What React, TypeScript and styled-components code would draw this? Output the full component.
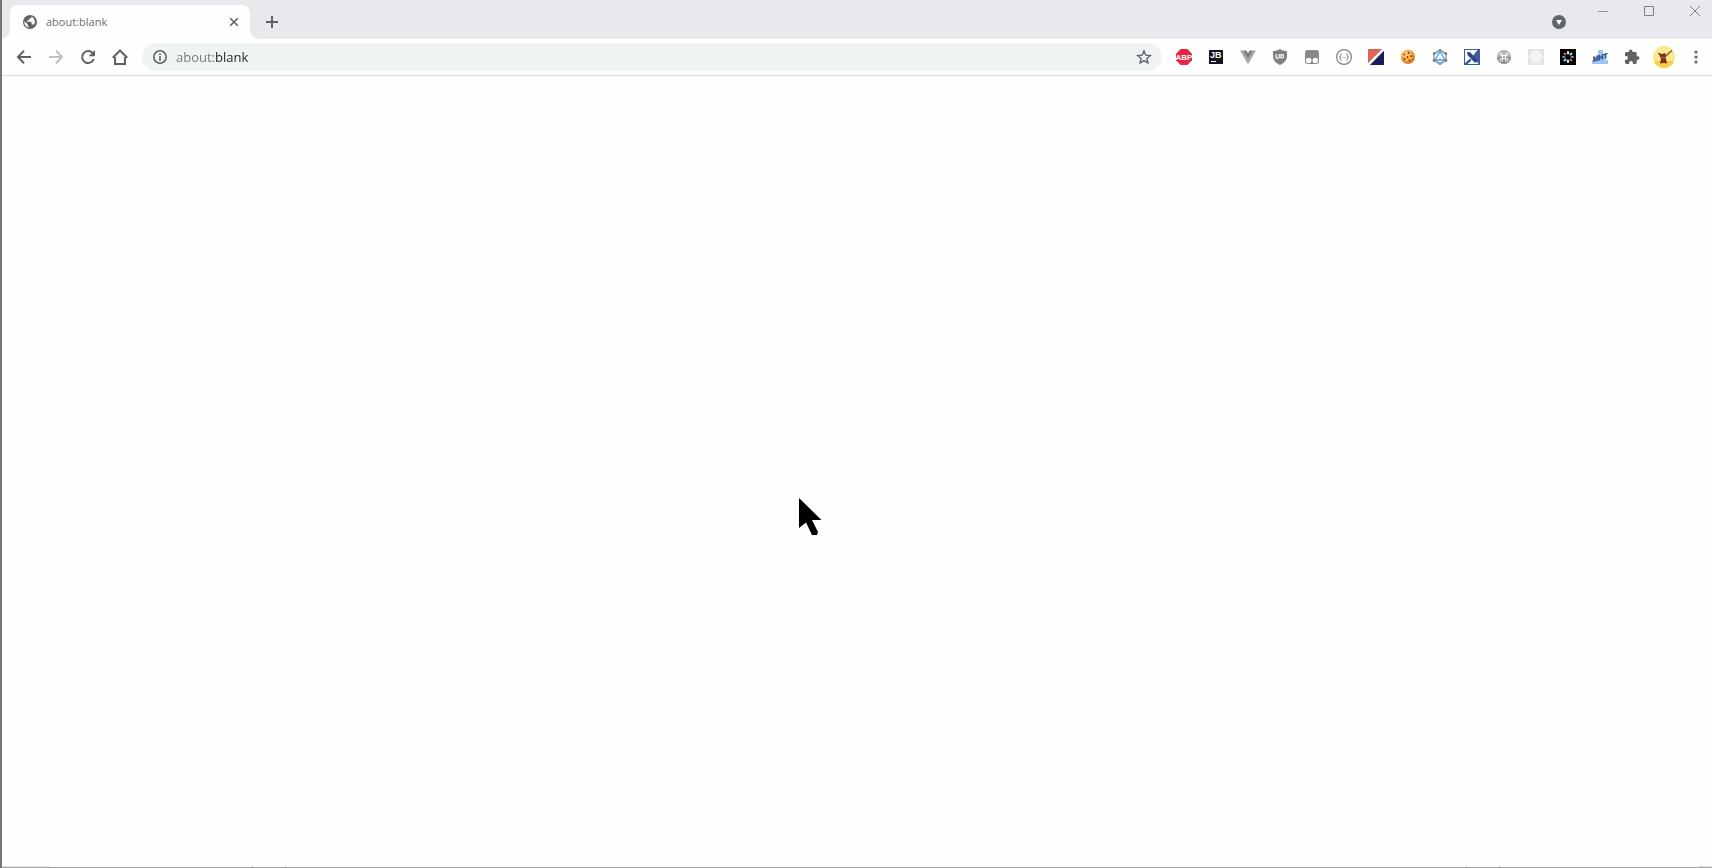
import React from "react";
import styled, { createGlobalStyle } from "styled-components";

const GlobalStyle = createGlobalStyle`
  * { box-sizing: border-box; }
  body { margin: 0; background: #fefefe; font-family: "Open Sans", "Noto Sans", sans-serif; }
  button, input { font: inherit; }
`;

const Window = styled.div`
  display: flex;
  flex-direction: column;
  min-height: 100vh;
  border-left: 2px solid #757575;
  overflow: hidden;
`;

const TabStrip = styled.header`
  display: flex;
  align-items: flex-end;
  height: 39px;
  padding-left: 8px;
  background: #e8e9ed;
`;

const Tab = styled.div`
  position: relative;
  display: flex;
  align-items: center;
  width: 240px;
  height: 34px;
  padding: 0 8px 0 13px;
  background: #fefefe;
  border-radius: 8px 8px 0 0;

  &::before,
  &::after {
    content: "";
    position: absolute;
    bottom: 0;
    width: 8px;
    height: 8px;
  }
  &::before {
    right: 100%;
    background: radial-gradient(circle at 0 0, transparent 7px, #fefefe 8px);
  }
  &::after {
    left: 100%;
    background: radial-gradient(circle at 100% 0, transparent 7px, #fefefe 8px);
  }
`;

const TabTitle = styled.span`
  flex: 1;
  margin-left: 9px;
  font-size: 11px;
  line-height: 16px;
  color: #6f7174;
`;

const IconButton = styled.button<{ $w?: number; $h?: number }>`
  display: flex;
  flex: none;
  align-items: center;
  justify-content: center;
  width: ${(p) => p.$w ?? 32}px;
  height: ${(p) => p.$h ?? 32}px;
  padding: 0;
  border: 0;
  background: none;
  color: #5f6368;

  svg { display: block; }
  &:disabled { color: #bfc1c3; }
`;

const WindowControls = styled.div`
  display: flex;
  flex: none;
  align-self: flex-start;
  margin-left: auto;
  margin-right: -6px;
`;

const TabSearch = styled.div`
  padding-top: 11px;
  margin-right: 5px;
`;

const Toolbar = styled.nav`
  display: flex;
  align-items: center;
  height: 37px;
  padding-left: 6px;
  border-bottom: 1px solid #dadbdd;
`;

const Omnibox = styled.label`
  display: flex;
  flex: 1;
  align-items: center;
  min-width: 0;
  height: 28px;
  margin: 0 6px;
  padding: 0 2px 0 11px;
  border-radius: 14px;
  background: #f0f3f4;
  color: #5f6368;

  svg { flex: none; }
`;

const Address = styled.input`
  flex: 1;
  min-width: 0;
  height: 20px;
  margin-left: 9px;
  padding: 0;
  border: 0;
  outline: 0;
  font-size: 13px;
  line-height: 20px;
  /* the scheme is dimmed, the rest of the address is dark */
  background: linear-gradient(90deg, #73777b 40px, #202124 40px);
  background-clip: text;
  -webkit-background-clip: text;
  -webkit-text-fill-color: transparent;
`;

const Page = styled.main`
  display: flex;
  flex: 1;
  flex-direction: column;
  justify-content: flex-end;
`;

const BottomEdge = styled.footer`
  display: flex;
  justify-content: space-between;
  height: 2px;
  border-bottom: 1px solid #a3a3a3;
`;

const EdgeGroup = styled.div`
  display: flex;
`;

const EdgeShade = styled.div<{ $w: number }>`
  width: ${(p) => p.$w}px;
  height: 1px;
  background: #e4e4e4;
`;

const EdgeTick = styled.div<{ $before: number }>`
  width: 1px;
  height: 1px;
  margin-left: ${(p) => p.$before}px;
  background: #b0b0b0;
`;

const Pointer = styled.svg`
  position: absolute;
  left: 799px;
  top: 498px;
`;

type ArtProps = { size?: number; children: React.ReactNode };

const Art = ({ size = 16, children }: ArtProps) => (
  <svg width={size} height={size} viewBox={`0 0 ${size} ${size}`} fill="none" aria-hidden="true">
    {children}
  </svg>
);

const Globe = () => (
  <Art size={14}>
    <circle cx="7" cy="7" r="7" fill="#5f6368" />
    <path d="M1.4 6.2 4.9 9.600v1.100c0 .7.5 1.100 1.200 1.100v.8A5.600 5.600 0 0 1 1.400 6.200ZM8.300 1.600v.9c0 .8-.6 1.200-1.200 1.200H6v1.100c0 .5-.4.8-.8.8H4v1.200h3.800c.5 0 .8.4.8.8v1.600h.8c.7 0 1.100.4 1.300.9a5.600 5.600 0 0 0-2.400-8.500Z" fill="#fefefe" />
  </Art>
);

const Octagon = () => (
  <Art>
    <path d="M4.700 0h6.600L16 4.700v6.600L11.300 16H4.700L0 11.300V4.700Z" fill="#e62645" />
    <text x="8" y="11" textAnchor="middle" fontFamily="Liberation Sans Narrow, Liberation Sans" fontWeight="700" fontSize="8" fill="#fff">ABP</text>
  </Art>
);

const JetBrains = () => (
  <Art>
    <path d="M1 1h14v14H1Z" fill="#17131f" />
    <text x="2" y="9" fontFamily="Liberation Sans" fontWeight="700" fontSize="9" fill="#fff">JB</text>
    <path d="M3 12.500h5" stroke="#fff" />
  </Art>
);

const Vue = () => (
  <Art>
    <path d="M0 1.500h3.400L8 9.400l4.600-7.900H16L8 15.200Z" fill="#a5a5a5" />
    <path d="M3.200 1.500h3L8 4.600l1.800-3.100h3L8 9.800Z" fill="#777" />
  </Art>
);

const Shield = () => (
  <Art>
    <path d="M8 0c2 1.400 4.300 2 7 2v5c0 4.300-2.800 7-7 9-4.200-2-7-4.700-7-9V2c2.700 0 5-.6 7-2Z" fill="#808080" />
    <path d="M4 5v2.700a1.600 1.600 0 0 0 3.200 0V5M9 5.600v3.400h.9a1.700 1.700 0 0 0 0-3.400Z" stroke="#fff" strokeWidth="1.200" />
  </Art>
);

const Monkey = () => (
  <Art>
    <rect x="1" y="1" width="14" height="14" rx="3" fill="#888" />
    <circle cx="4.700" cy="11.500" r="2.700" fill="#fff" />
    <circle cx="11.300" cy="11.500" r="2.700" fill="#fff" />
  </Art>
);

const Swagger = () => (
  <Art>
    <circle cx="8" cy="8" r="7.400" stroke="#808080" strokeWidth="1.200" />
    <path d="M5.700 4.700c-1.500 0-1.200.7-1.200 1.800S4.200 8 3.500 8c.7 0 1 .4 1 1.500s-.3 1.800 1.200 1.800M10.300 4.700c1.500 0 1.200.7 1.200 1.800S11.800 8 12.500 8c-.7 0-1 .4-1 1.500s.3 1.800-1.200 1.800" stroke="#777" />
    <path d="M6 8.500h.9M7.600 8.500h.9M9.200 8.500h.9" stroke="#999" />
  </Art>
);

const SplitSquare = () => (
  <Art>
    <path d="M0 0h16L0 16Z" fill="#e0635a" />
    <path d="M16 0v16H0Z" fill="#1c1c5c" />
    <path d="M16.500-.5-.5 16.500" stroke="#fff" strokeWidth="2.600" />
  </Art>
);

const Cookie = () => (
  <Art>
    <circle cx="8" cy="8" r="7" fill="#dc8423" />
    <circle cx="7.400" cy="7" r="5.800" fill="#f3b04c" />
    <circle cx="6" cy="5.500" r="3" fill="#f8cf72" />
    <g fill="#98261c">
      <circle cx="4.300" cy="5.500" r=".9" />
      <circle cx="8.500" cy="4" r=".9" />
      <circle cx="7.500" cy="8" r=".9" />
      <circle cx="11.500" cy="7.300" r="1" />
      <circle cx="4.500" cy="10" r=".9" />
      <circle cx="9.500" cy="11.500" r="1" />
      <circle cx="12.500" cy="10.500" r=".7" />
    </g>
  </Art>
);

const GraphStar = () => (
  <Art>
    <path d="m8 1 6 3.500v7L8 15l-6-3.500v-7Z" fill="#fff" stroke="#9b9384" strokeWidth="1.400" />
    <path d="M8 2.500 13 11H3Z" fill="#fff" stroke="#429ce8" strokeWidth="1.300" />
    <path d="M3.500 5.500 8 1.500l4.500 4M4 11.500 8 14.500l4-3" stroke="#6bb2ec" />
    <g fill="#77705f">
      <circle cx="2" cy="4.500" r="1.200" />
      <circle cx="14" cy="4.500" r="1.200" />
      <circle cx="2" cy="11.500" r="1.200" />
      <circle cx="14" cy="11.500" r="1.200" />
    </g>
    <g fill="#429ce8">
      <circle cx="8" cy="1.300" r="1.300" />
      <circle cx="8" cy="14.700" r="1.300" />
    </g>
  </Art>
);

const CrossSquare = () => (
  <Art>
    <path d="M0 0h16v16H0Z" fill="#3d5c9f" />
    <path d="M1 1h13L10.500 5.500 8 8 1 15ZM8 8l3.500 2.500L14.500 15H2Z" fill="#fff" />
    <path d="M1 2v12l4-5.500Z" fill="#fff" />
    <path d="m3 3 3.200.2L13.500 11l-.8 2.200-2.300.4L3.600 6Z" fill="#2f4a82" />
    <path d="M16 0h-1.500L9.500 6l1.800 1.800L16 4ZM0 16h2.500l5-4.500L6 9.500 0 15Z" fill="#3d5c9f" />
  </Art>
);

const Command = () => (
  <Art>
    <circle cx="8" cy="8" r="7" fill="#adadad" />
    <path d="M1 8a7 7 0 0 0 14 0Z" fill="#939393" />
    <path d="M6.500 6.500h3v3h-3ZM6.500 6.500H5.300a1.300 1.300 0 1 1 1.200-1.300ZM9.500 6.500V5.200a1.300 1.300 0 1 1 1.200 1.300ZM6.500 9.500v1.300a1.300 1.300 0 1 1-1.200-1.300ZM9.500 9.500h1.200a1.300 1.300 0 1 1-1.200 1.300Z" stroke="#fff" />
  </Art>
);

const ReactLogo = () => (
  <Art>
    <path d="M0 0h16v16H0Z" fill="#e3e3e3" />
    <g stroke="#fff">
      <ellipse cx="8" cy="8" rx="6.500" ry="2.500" />
      <ellipse cx="8" cy="8" rx="6.500" ry="2.500" transform="rotate(60 8 8)" />
      <ellipse cx="8" cy="8" rx="6.500" ry="2.500" transform="rotate(120 8 8)" />
    </g>
    <circle cx="8" cy="8" r="1.300" fill="#fff" />
  </Art>
);

const Burst = () => (
  <Art>
    <path d="M0 0h16v16H0Z" fill="#000" />
    <g strokeWidth="2.200">
      <path d="M8 2.300v3M8 10.700v3" stroke="#d9eef8" />
      <path d="M2.300 8h3M10.700 8h3" stroke="#4e98c6" />
      <path d="m4 4 2 2M10 10l2 2" stroke="#d6545b" />
      <path d="m12 4-2 2M6 10l-2 2" stroke="#9ed7ee" />
    </g>
  </Art>
);

const Mht = () => (
  <Art>
    <path d="M6 1h5v4h2v6h3v4H0v-4h6Z" fill="#9ec6f4" />
    <text x="8" y="11" textAnchor="middle" fontFamily="Liberation Sans" fontWeight="700" fontStyle="italic" fontSize="7" fill="#20407c" stroke="#20407c" strokeWidth=".3" transform="rotate(-15 8 8)">MHT</text>
  </Art>
);

const Puzzle = () => (
  <Art>
    <path d="M13.700 7.300h-1V4.400c0-.8-.6-1.400-1.400-1.400H8.500v-.8a1.800 1.800 0 0 0-3.600 0V3H2.400C1.600 3 1 3.600 1 4.400V7h1a1.900 1.900 0 0 1 0 3.800H1v2.800c0 .8.6 1.400 1.400 1.400h2.700v-1a1.900 1.900 0 0 1 3.800 0v1h2.400c.8 0 1.400-.6 1.400-1.400v-2.700h1a1.800 1.800 0 0 0 0-3.600Z" fill="#5f6368" />
  </Art>
);

const Avatar = () => (
  <Art size={22}>
    <circle cx="11" cy="11" r="11" fill="#fbe88f" />
    <path d="M.8 15a11 11 0 0 0 20.400 0Z" fill="#fbcb4b" />
    <path d="M6 7.500 9 8l3-1 1 2-1 2 1 1.500V17H8v-4.500L7 11Z" fill="#74351f" />
    <path d="m11 12 5-5 3-2.500" stroke="#8c4a28" strokeWidth="1.300" />
    <path d="m5.500 7 4 4M8 17.500v-3M13 17.500v-3" stroke="#74351f" strokeWidth="1.500" />
    <path d="m8 11 4 1" stroke="#bb4b34" strokeWidth="1.300" />
  </Art>
);

const Dots = () => (
  <Art>
    <g fill="#5f6368">
      <circle cx="8" cy="3" r="1.600" />
      <circle cx="8" cy="8" r="1.600" />
      <circle cx="8" cy="13" r="1.600" />
    </g>
  </Art>
);

const actions: [string, () => React.JSX.Element][] = [
  ["Adblock Plus", Octagon],
  ["JetBrains", JetBrains],
  ["Vue devtools", Vue],
  ["uBlock", Shield],
  ["Tampermonkey", Monkey],
  ["Swagger", Swagger],
  ["Split view", SplitSquare],
  ["Cookies", Cookie],
  ["GraphQL", GraphStar],
  ["Cross", CrossSquare],
  ["Shortcuts", Command],
  ["React tools", ReactLogo],
  ["Burst", Burst],
  ["MHT", Mht],
  ["Extensions", Puzzle],
  ["Profile", Avatar],
  ["Menu", Dots],
];

export default function App() {
  return (
    <Window>
      <GlobalStyle />
      <TabStrip>
        <Tab>
          <Globe />
          <TabTitle>about:blank</TabTitle>
          <IconButton $w={16} $h={16} aria-label="Close tab">
            <Art><path d="m4.200 4.200 7.600 7.600M11.800 4.200l-7.600 7.600" stroke="currentColor" strokeWidth="1.600" /></Art>
          </IconButton>
        </Tab>
        <IconButton $w={44} $h={34} aria-label="New tab">
          <Art><path d="M8 2v12M2 8h12" stroke="currentColor" strokeWidth="2" /></Art>
        </IconButton>
        <WindowControls>
          <TabSearch>
            <IconButton $h={22} aria-label="Search tabs">
              <Art size={14}>
                <circle cx="7" cy="7" r="7" fill="#5f6868" />
                <path d="M4 5h6l-3 5Z" fill="#fff" />
              </Art>
            </IconButton>
          </TabSearch>
          <IconButton $w={46} $h={22} aria-label="Minimize">
            <Art size={10}><path d="M0 5.500h10" stroke="#8d8e90" /></Art>
          </IconButton>
          <IconButton $w={46} $h={22} aria-label="Maximize">
            <Art size={10}><path d="M.5.5h9v9h-9Z" stroke="#808183" /></Art>
          </IconButton>
          <IconButton $w={46} $h={22} aria-label="Close">
            <Art size={10}><path d="m0 0 10 10M10 0 0 10" stroke="#808183" /></Art>
          </IconButton>
        </WindowControls>
      </TabStrip>
      <Toolbar>
        <IconButton aria-label="Back">
          <Art><path d="M15 8H2.500M8 1.700 1.900 8 8 14.300" stroke="currentColor" strokeWidth="2" /></Art>
        </IconButton>
        <IconButton aria-label="Forward" disabled>
          <Art><path d="M1 8h12.500M8 1.700 14.100 8 8 14.300" stroke="currentColor" strokeWidth="2" /></Art>
        </IconButton>
        <IconButton aria-label="Reload">
          <Art>
            <path d="M12.600 4A6 6 0 1 0 13.800 10" stroke="currentColor" strokeWidth="2" />
            <path d="M15 1v6.300H8.700Z" fill="currentColor" />
          </Art>
        </IconButton>
        <IconButton aria-label="Home">
          <Art><path d="M.8 8.700 8 1.500l7.200 7.200M3 8v7h10V8" stroke="currentColor" strokeWidth="2" /></Art>
        </IconButton>
        <Omnibox>
          <Art size={14}>
            <circle cx="7" cy="7" r="6.200" stroke="currentColor" strokeWidth="1.600" />
            <path d="M7 6v5M7 3.300v1.600" stroke="currentColor" strokeWidth="1.600" />
          </Art>
          <Address aria-label="Address" defaultValue="about:blank" spellCheck={false} />
          <IconButton $h={28} aria-label="Bookmark this tab">
            <Art><path d="m8 2 1.800 4.100 4.500.4-3.400 3 1 4.400L8 11.600 4.100 13.900l1-4.400-3.400-3 4.500-.4Z" stroke="currentColor" strokeWidth="1.400" /></Art>
          </IconButton>
        </Omnibox>
        {actions.map(([name, Picture]) => (
          <IconButton key={name} aria-label={name}><Picture /></IconButton>
        ))}
      </Toolbar>
      <Page>
        <BottomEdge>
          <EdgeGroup>
            <EdgeShade $w={48} />
            <EdgeTick $before={202} />
            <EdgeTick $before={32} />
          </EdgeGroup>
          <EdgeGroup>
            <EdgeTick $before={0} />
            <EdgeTick $before={32} />
            <EdgeTick $before={200} />
            <EdgeShade $w={11} />
          </EdgeGroup>
        </BottomEdge>
      </Page>
      <Pointer width="23" height="38" viewBox="0 0 23 38" aria-hidden="true">
        <path d="M0 0 22.500 22H13l6 12-1 3h-5L7 24.500 0 30Z" fill="#000" />
      </Pointer>
    </Window>
  );
}
